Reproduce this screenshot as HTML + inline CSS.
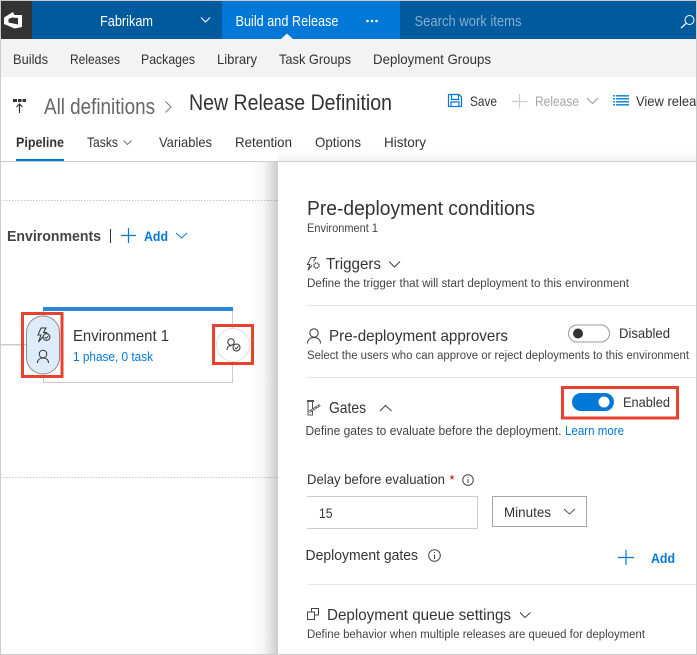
<!DOCTYPE html>
<html>
<head>
<meta charset="utf-8">
<style>
html,body{margin:0;padding:0;background:#fff;width:697px;height:655px;overflow:hidden}
svg{display:block}
text{font-family:"Liberation Sans",sans-serif;fill:#333;font-size:14px}
.w{fill:#fff;font-size:14.5px}
.n{fill:#333;font-size:14px}
.b{fill:#0078d7}
.d{font-size:11.5px;fill:#444}
.h{font-size:16px;fill:#333}
</style>
</head>
<body>
<svg width="697" height="655" viewBox="0 0 697 655" xmlns="http://www.w3.org/2000/svg">
<defs>
<linearGradient id="sh" x1="0" x2="1" y1="0" y2="0">
<stop offset="0" stop-color="#000" stop-opacity="0"/>
<stop offset="0.5" stop-color="#000" stop-opacity=".04"/>
<stop offset="1" stop-color="#000" stop-opacity=".2"/>
</linearGradient>
<linearGradient id="st" x1="0" x2="0" y1="0" y2="1">
<stop offset="0" stop-color="#000" stop-opacity="0"/>
<stop offset="1" stop-color="#000" stop-opacity=".05"/>
</linearGradient>
</defs>
<rect width="697" height="655" fill="#fff"/>

<!-- header -->
<rect x="0" y="1" width="32" height="38" fill="#333"/>
<rect x="32" y="1" width="190" height="38" fill="#005a9e"/>
<rect x="222" y="1" width="178" height="38" fill="#0078d7"/>
<rect x="400" y="1" width="297" height="38" fill="#005a9e"/>
<path d="M4 17.5 L13 12 L14.5 15 L22 15 L22 27 L14.5 28.5 L4 24 Z M8.5 19 L8.5 22.5 L18 24.5 L18 18 L12 17.5 Z" fill="#fff" fill-rule="evenodd"/>
<text class="w" x="100" y="26" textLength="53" lengthAdjust="spacingAndGlyphs">Fabrikam</text>
<path d="M201 17.5 L205.5 22 L210 17.5" fill="none" stroke="#fff" stroke-width="1.1"/>
<text class="w" x="235.5" y="26" textLength="103" lengthAdjust="spacingAndGlyphs">Build and Release</text>
<path d="M281 39 L287 33.5 L293 39 Z" fill="#f3f3f3"/>
<circle cx="367.5" cy="21" r="1.3" fill="#fff"/><circle cx="372" cy="21" r="1.3" fill="#fff"/><circle cx="376.5" cy="21" r="1.3" fill="#fff"/>
<text class="w" x="414.5" y="26" textLength="107" lengthAdjust="spacingAndGlyphs" style="fill:#85afd0">Search work items</text>
<circle cx="689.5" cy="20" r="4.5" fill="none" stroke="#fff" stroke-width="1"/>
<path d="M686 23.5 L681 28" stroke="#fff" stroke-width="1.2" fill="none"/>

<!-- sub nav -->
<rect x="0" y="39" width="697" height="38" fill="#f3f3f3"/>
<text class="n" x="13" y="64" textLength="35" lengthAdjust="spacingAndGlyphs">Builds</text>
<text class="n" x="70" y="64" textLength="50" lengthAdjust="spacingAndGlyphs">Releases</text>
<text class="n" x="141" y="64" textLength="54" lengthAdjust="spacingAndGlyphs">Packages</text>
<text class="n" x="217" y="64" textLength="40" lengthAdjust="spacingAndGlyphs">Library</text>
<text class="n" x="279" y="64" textLength="72" lengthAdjust="spacingAndGlyphs">Task Groups</text>
<text class="n" x="373" y="64" textLength="118" lengthAdjust="spacingAndGlyphs">Deployment Groups</text>

<!-- title -->
<rect x="13" y="99" width="4" height="3" fill="#333"/><rect x="18" y="99" width="3.5" height="3" fill="#333"/><rect x="22.5" y="99" width="3.5" height="3" fill="#333"/>
<path d="M19.5 113 V104.5 M16.5 107 L19.5 104 L22.5 107" fill="none" stroke="#333" stroke-width="1.2"/>
<text x="44" y="114" textLength="111" lengthAdjust="spacingAndGlyphs" style="font-size:22px;fill:#666">All definitions</text>
<path d="M165.5 101.5 L171 107 L165.5 112.5" fill="none" stroke="#777" stroke-width="1"/>
<text x="189" y="110" textLength="203" lengthAdjust="spacingAndGlyphs" style="font-size:22px;fill:#333">New Release Definition</text>

<path d="M448.5 94.5 H459 L461.5 97 V106.5 H448.5 Z M451.5 94.5 V99.5 H458.5 V94.5 M451 106.5 V102 H459 V106.5" fill="none" stroke="#0078d7" stroke-width="1.2"/>
<text class="n" x="470" y="106" textLength="27" lengthAdjust="spacingAndGlyphs">Save</text>
<path d="M512 101.5 H527.5 M519.5 94 V108.5" stroke="#ccc" stroke-width="1.2" fill="none"/>
<text class="n" x="535" y="106" textLength="44" lengthAdjust="spacingAndGlyphs" style="fill:#a6a6a6">Release</text>
<path d="M587 98 L592.5 103.5 L598 98" fill="none" stroke="#999" stroke-width="1"/>
<g fill="#0078d7" opacity=".85">
<rect x="613" y="95" width="2" height="1.6"/><rect x="616" y="95" width="13" height="1.6"/>
<rect x="613" y="98" width="2" height="1.6"/><rect x="616" y="98" width="13" height="1.6"/>
<rect x="613" y="101" width="2" height="1.6"/><rect x="616" y="101" width="13" height="1.6"/>
<rect x="613" y="104" width="2" height="1.6"/><rect x="616" y="104" width="13" height="1.6"/>
</g>
<text class="n" x="636" y="106" textLength="74" lengthAdjust="spacingAndGlyphs">View release</text>

<!-- tabs -->
<text class="n" x="16" y="147" textLength="48" lengthAdjust="spacingAndGlyphs" style="font-weight:bold;fill:#333">Pipeline</text>
<text class="n" x="87" y="147" textLength="31" lengthAdjust="spacingAndGlyphs">Tasks</text>
<path d="M123.5 140.5 L127.5 144.5 L131.5 140.5" fill="none" stroke="#666" stroke-width=".9"/>
<text class="n" x="159" y="147" textLength="53" lengthAdjust="spacingAndGlyphs">Variables</text>
<text class="n" x="235" y="147" textLength="57" lengthAdjust="spacingAndGlyphs">Retention</text>
<text class="n" x="315" y="147" textLength="46" lengthAdjust="spacingAndGlyphs">Options</text>
<text class="n" x="384" y="147" textLength="42" lengthAdjust="spacingAndGlyphs">History</text>
<rect x="278" y="150" width="419" height="11" fill="url(#st)"/>
<rect x="0" y="161" width="697" height="1" fill="#ccc"/>
<rect x="16" y="159" width="48" height="2" fill="#0078d7"/>

<!-- left canvas -->
<path d="M0 200.5 H278 M0 477.5 H278" stroke="#c8c8c8" stroke-width="1" stroke-dasharray="1.5 1.5" fill="none"/>
<text x="7" y="241" textLength="94" lengthAdjust="spacingAndGlyphs" style="font-size:15px;font-weight:bold;fill:#444">Environments</text>
<rect x="110" y="229" width="1" height="14" fill="#333"/>
<path d="M121 235.5 H136 M128.5 228 V243" stroke="#0078d7" stroke-width="1.2" fill="none"/>
<text x="144" y="241" textLength="24" lengthAdjust="spacingAndGlyphs" class="b" style="font-size:14px;font-weight:bold">Add</text>
<path d="M176 233 L181.5 238 L187 233" fill="none" stroke="#0078d7" stroke-width="1"/>

<rect x="43.5" y="307.5" width="189" height="75" fill="#fff" stroke="#ccc"/>
<rect x="43" y="307" width="190" height="4" fill="#2b88d8"/>
<rect x="0" y="344" width="26" height="1.5" fill="#ccc"/>
<text x="73" y="341" textLength="96" lengthAdjust="spacingAndGlyphs" style="font-size:16px;fill:#333">Environment 1</text>
<text x="73" y="361" textLength="80" lengthAdjust="spacingAndGlyphs" class="b" style="font-size:13px">1 phase, 0 task</text>

<rect x="26.5" y="316" width="33" height="58" rx="16.5" fill="#deecf9" stroke="#8a8a8a" stroke-width="1"/>
<path d="M41 328 H46 L43.5 332.5 H46.5 L38.5 342 L41 335 H38 Z" fill="none" stroke="#333" stroke-width="1"/>
<circle cx="46.5" cy="337" r="3.4" fill="#deecf9" stroke="#333" stroke-width="1"/>
<path d="M44.8 337 L46.2 338.4 L48.4 335.8" fill="none" stroke="#333" stroke-width=".9"/>
<circle cx="43" cy="354" r="3.8" fill="none" stroke="#333" stroke-width="1"/>
<path d="M37.5 363 C37.5 359.5 40 358 43 358 C46 358 48.5 359.5 48.5 363" fill="none" stroke="#333" stroke-width="1"/>
<rect x="22.5" y="313.5" width="39.5" height="63" fill="none" stroke="#e8412f" stroke-width="3"/>

<circle cx="233" cy="345" r="16.5" fill="#fff" stroke="#ddd"/>
<circle cx="231" cy="342" r="3.2" fill="none" stroke="#333"/>
<path d="M227 350 C227 347 229 345.5 231.5 345.5" fill="none" stroke="#333"/>
<circle cx="236.5" cy="347.5" r="3.5" fill="#fff" stroke="#333" stroke-width="1"/>
<path d="M234.8 347.5 L236.2 348.9 L238.4 346.3" fill="none" stroke="#333" stroke-width=".9"/>
<rect x="213.5" y="325.5" width="39" height="38" fill="none" stroke="#e8412f" stroke-width="3"/>

<!-- panel shadow & panel -->
<rect x="250" y="162" width="28" height="492" fill="url(#sh)"/>
<rect x="278" y="162" width="419" height="493" fill="#fff"/>

<text x="307" y="215" textLength="228" lengthAdjust="spacingAndGlyphs" style="font-size:20px;fill:#333">Pre-deployment conditions</text>
<text x="307" y="232" textLength="71" lengthAdjust="spacingAndGlyphs" style="font-size:11.5px;fill:#444">Environment 1</text>

<path d="M311 257.5 H316 L313.5 261.5 M311 257.5 L307.5 264.5 H310 L308 270 L312 265.5" fill="none" stroke="#444" stroke-width="1"/>
<circle cx="316.5" cy="265.5" r="2.6" fill="none" stroke="#444" stroke-width="1.4" stroke-dasharray="1.4 .6"/>
<text class="h" x="326" y="269" textLength="55" lengthAdjust="spacingAndGlyphs">Triggers</text>
<path d="M389 261.5 L394.5 267 L400 261.5" fill="none" stroke="#444" stroke-width="1"/>
<text class="d" x="307" y="287" textLength="322" lengthAdjust="spacingAndGlyphs">Define the trigger that will start deployment to this environment</text>
<rect x="307" y="305" width="390" height="1" fill="#e6e6e6"/>

<circle cx="314" cy="333" r="4.2" fill="none" stroke="#444" stroke-width="1.1"/>
<path d="M307.5 343.5 C307.5 339.5 310.5 337.5 314 337.5 C317.5 337.5 320.5 339.5 320.5 343.5" fill="none" stroke="#444" stroke-width="1.1"/>
<text class="h" x="329" y="341" textLength="179" lengthAdjust="spacingAndGlyphs">Pre-deployment approvers</text>
<rect x="568.5" y="325" width="41" height="17" rx="8.5" fill="#fff" stroke="#999"/>
<circle cx="578" cy="333.5" r="5" fill="#333"/>
<text class="n" x="619" y="338" textLength="51" lengthAdjust="spacingAndGlyphs">Disabled</text>
<text class="d" x="307" y="359" textLength="382" lengthAdjust="spacingAndGlyphs">Select the users who can approve or reject deployments to this environment</text>
<rect x="307" y="377" width="390" height="1" fill="#e6e6e6"/>

<rect x="308" y="401" width="4.5" height="14" fill="none" stroke="#555" stroke-width="1"/>
<rect x="307" y="400" width="7" height="2" fill="#555"/>
<path d="M309 412 L320 405" stroke="#555" stroke-width="2.4" fill="none"/>
<path d="M309 412 L320 405" stroke="#fff" stroke-width=".8" fill="none" stroke-dasharray="2 1"/>
<text class="h" x="329" y="413" textLength="37" lengthAdjust="spacingAndGlyphs">Gates</text>
<path d="M380 411 L385.5 405.5 L391.5 411" fill="none" stroke="#444" stroke-width="1"/>

<rect x="572" y="393" width="42" height="18" rx="9" fill="#0078d7"/>
<circle cx="604" cy="402" r="5.5" fill="#fff"/>
<text class="n" x="623" y="407" textLength="47" lengthAdjust="spacingAndGlyphs">Enabled</text>
<rect x="562.5" y="387.5" width="115" height="30.5" fill="none" stroke="#e8412f" stroke-width="3"/>
<text x="305.5" y="435" textLength="256" lengthAdjust="spacingAndGlyphs" style="font-size:12.5px;fill:#444">Define gates to evaluate before the deployment.</text>
<text x="565" y="435" textLength="59" lengthAdjust="spacingAndGlyphs" class="b" style="font-size:12.5px">Learn more</text>

<text x="307" y="484" textLength="138" lengthAdjust="spacingAndGlyphs" style="font-size:14px;fill:#333">Delay before evaluation</text>
<text x="449.5" y="484" style="font-size:13px;fill:#a80000">*</text>
<circle cx="468" cy="480" r="5.3" fill="none" stroke="#444"/>
<rect x="467.5" y="479" width="1" height="4" fill="#444"/><rect x="467.5" y="476.8" width="1" height="1" fill="#444"/>

<path d="M307 496.5 H477.5 V528.5 H307" fill="none" stroke="#ccc"/>
<text class="n" x="319" y="518" textLength="13.5" lengthAdjust="spacingAndGlyphs">15</text>
<rect x="492.5" y="496.5" width="94" height="30" fill="#fff" stroke="#a6a6a6"/>
<text class="n" x="504" y="517" textLength="47" lengthAdjust="spacingAndGlyphs">Minutes</text>
<path d="M564 509 L569.5 514 L575 509" fill="none" stroke="#555" stroke-width="1"/>

<text x="305.5" y="560" textLength="112.5" lengthAdjust="spacingAndGlyphs" style="font-size:14.5px;fill:#333">Deployment gates</text>
<circle cx="434.5" cy="555.5" r="5.8" fill="none" stroke="#444"/>
<rect x="434" y="554.5" width="1" height="4.5" fill="#444"/><rect x="434" y="552" width="1" height="1" fill="#444"/>
<path d="M618 557.5 H634 M626 550 V565" stroke="#0078d7" stroke-width="1.2" fill="none"/>
<text x="651" y="563" textLength="24" lengthAdjust="spacingAndGlyphs" class="b" style="font-size:14px;font-weight:bold">Add</text>
<rect x="307" y="584" width="390" height="1" fill="#e6e6e6"/>

<rect x="307.5" y="612" width="7" height="7.5" fill="#fff" stroke="#444"/>
<path d="M311.5 611.5 V608.5 H318.5 V615 H315" fill="none" stroke="#444"/>
<text class="h" x="327" y="620" textLength="184" lengthAdjust="spacingAndGlyphs">Deployment queue settings</text>
<path d="M520 612.5 L525 617.5 L530.5 612.5" fill="none" stroke="#444" stroke-width="1"/>
<text class="d" x="307" y="638" textLength="338" lengthAdjust="spacingAndGlyphs">Define behavior when multiple releases are queued for deployment</text>

<!-- outer frame -->
<rect x="0.5" y="0.5" width="696" height="654" fill="none" stroke="#ccc"/>
</svg>
</body>
</html>
